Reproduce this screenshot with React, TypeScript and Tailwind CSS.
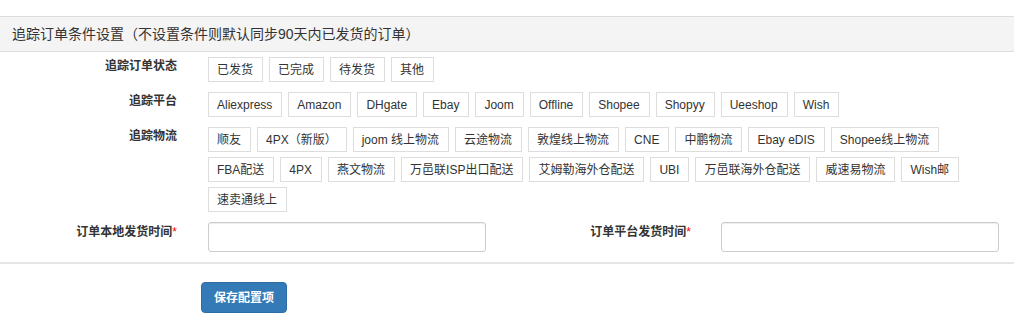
import React from "react";

const FONT = '"Liberation Sans", Arial, "Noto Sans CJK SC", sans-serif';

const status = ["已发货", "已完成", "待发货", "其他"];
const platforms = ["Aliexpress", "Amazon", "DHgate", "Ebay", "Joom", "Offline", "Shopee", "Shopyy", "Ueeshop", "Wish"];
const logistics = [
  "顺友", "4PX（新版）", "joom 线上物流", "云途物流", "敦煌线上物流", "CNE", "中鹏物流", "Ebay eDIS", "Shopee线上物流",
  "FBA配送", "4PX", "燕文物流", "万邑联ISP出口配送", "艾姆勒海外仓配送", "UBI", "万邑联海外仓配送", "威速易物流", "Wish邮",
  "速卖通线上",
];

function Tag({ text }: { text: string }) {
  return (
    <div className="h-[25px] flex items-center pl-[8px] pr-[9px] border border-[#dddddd] bg-white text-[12px] text-[#333333] leading-none whitespace-nowrap">
      {text}
    </div>
  );
}

function Group({ label, items }: { label: string; items: string[] }) {
  return (
    <div className="flex">
      <div className="w-[177px] shrink-0 text-right text-[12px] font-bold text-[#333333] leading-[16px] pt-[1px]">
        {label}
      </div>
      <div className="ml-[31px] w-[760px] flex flex-wrap gap-x-[6px] gap-y-[5px]">
        {items.map((t) => (
          <Tag key={t} text={t} />
        ))}
      </div>
    </div>
  );
}

export default function App() {
  return (
    <div className="w-[1014px] h-[320px] bg-white overflow-hidden" style={{ fontFamily: FONT }}>
      <div className="h-[16px]" />
      <div className="h-[36px] border-y border-[#dcdcdc] bg-[#f4f4f4] flex items-center pl-[12px] text-[14px] text-[#333333]">
        追踪订单条件设置（不设置条件则默认同步90天内已发货的订单）
      </div>
      <div className="pt-[5px] flex flex-col gap-[10px]">
        <Group label="追踪订单状态" items={status} />
        <Group label="追踪平台" items={platforms} />
        <Group label="追踪物流" items={logistics} />
        <div className="flex items-start">
          <div className="w-[177px] shrink-0 text-right text-[12px] font-bold text-[#333333] leading-[16px] pt-[2px]">
            订单本地发货时间<span className="text-[#ff0000] font-normal">*</span>
          </div>
          <input className="ml-[31px] w-[278px] h-[30px] border border-[#cccccc] rounded-[3px] shadow-[inset_0_1px_1px_rgba(0,0,0,0.075)] bg-white" />
          <div className="w-[205px] shrink-0 text-right text-[12px] font-bold text-[#333333] leading-[16px] pt-[2px]">
            订单平台发货时间<span className="text-[#ff0000] font-normal">*</span>
          </div>
          <input className="ml-[30px] w-[278px] h-[30px] border border-[#cccccc] rounded-[3px] shadow-[inset_0_1px_1px_rgba(0,0,0,0.075)] bg-white" />
        </div>
      </div>
      <div className="mt-[10px] border-t-2 border-[#e5e5e5]" />
      <div className="pt-[18px] pl-[201px]">
        <button className="w-[86px] h-[31px] rounded-[4px] bg-[#337ab7] border border-[#2e6da4] text-white text-[12px] font-bold flex items-center justify-center">
          保存配置项
        </button>
      </div>
    </div>
  );
}
